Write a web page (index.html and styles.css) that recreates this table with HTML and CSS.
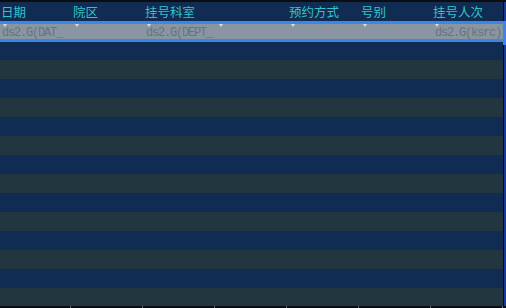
FILE: index.html
```html
<!DOCTYPE html>
<html>
<head>
<meta charset="utf-8">
<link rel="stylesheet" href="styles.css">
</head>
<body>
<div class="table">
  <div class="topline"></div>
  <div class="row header">
    <div class="cell">日期</div>
    <div class="cell">院区</div>
    <div class="cell">挂号科室</div>
    <div class="cell"></div>
    <div class="cell">预约方式</div>
    <div class="cell">号别</div>
    <div class="cell">挂号人次</div>
  </div>
  <div class="sel">
    <div class="cell"><span class="tri"></span>ds2.G(DAT_</div>
    <div class="cell"><span class="tri"></span></div>
    <div class="cell"><span class="tri"></span>ds2.G(DEPT_</div>
    <div class="cell"><span class="tri"></span></div>
    <div class="cell"><span class="tri"></span></div>
    <div class="cell"><span class="tri"></span></div>
    <div class="cell last"><span class="tri"></span>ds2.G(ksrc)</div>
    <span class="handle"></span>
  </div>
  <div class="body">
    <div class="row first navy"></div>
    <div class="row slate"></div>
    <div class="row navy"></div>
    <div class="row slate"></div>
    <div class="row navy"></div>
    <div class="row slate"></div>
    <div class="row navy"></div>
    <div class="row slate"></div>
    <div class="row navy"></div>
    <div class="row slate"></div>
    <div class="row navy"></div>
    <div class="row slate"></div>
    <div class="row navy"></div>
    <div class="row slate short"></div>
  </div>
  <div class="bottom">
    <span class="tick"></span><span class="tick"></span><span class="tick"></span><span class="tick"></span><span class="tick"></span><span class="tick"></span><span class="tick"></span>
  </div>
</div>
</body>
</html>
```
FILE: styles.css
```css
html, body {
  margin: 0;
  padding: 0;
  background: #0b0d10;
}
.table {
  width: 506px;
  height: 308px;
  overflow: hidden;
  display: flex;
  flex-direction: column;
  background: #173c98;
  position: relative;
}
.topline {
  height: 2px;
  background: #0b0d10;
  flex: none;
}
.row {
  display: grid;
  grid-template-columns: repeat(6, 72px) 71px;
  width: 504px;
  box-sizing: border-box;
  border-right: 1px solid #05080c;
  flex: none;
}
.header {
  height: 19px;
  background: #112c52;
  font-family: "Noto Sans CJK SC", "Noto Sans CJK JP", sans-serif;
  font-size: 12.5px;
  color: #33c4c9;
  line-height: 19px;
}
.header .cell {
  padding-left: 1px;
  white-space: nowrap;
}
.sel {
  position: relative;
  display: grid;
  grid-template-columns: repeat(6, 72px) 71px;
  width: 506px;
  height: 21px;
  box-sizing: border-box;
  border-top: 3px solid #3b86e6;
  border-bottom: 3px solid #3b86e6;
  border-right: 3px solid #3b86e6;
  background: #8996a2;
  font-family: "Liberation Mono", monospace;
  font-size: 12px;
  letter-spacing: -1.2px;
  line-height: 15px;
  color: #68737e;
  flex: none;
}
.sel .cell {
  position: relative;
  padding-left: 2px;
  padding-top: 2px;
  white-space: nowrap;
  overflow: hidden;
}
.sel .cell.last {
  padding-left: 3px;
}
.tri {
  position: absolute;
  left: 3px;
  top: 0;
  width: 0;
  height: 0;
  border-left: 2px solid transparent;
  border-right: 2px solid transparent;
  border-top: 3px solid #d6dce2;
}
.handle {
  position: absolute;
  right: -3px;
  bottom: -6px;
  width: 3px;
  height: 6px;
  background: #3b86e6;
}
.body {
  display: flex;
  flex-direction: column;
  flex: none;
}
.body .row {
  height: 19px;
}
.body .row.first {
  height: 18px;
}
.body .row.short {
  height: 18px;
}
.navy {
  background: #112c52;
}
.slate {
  background: #223640;
}
.bottom {
  flex: 1;
  background: #0b0d10;
  display: grid;
  grid-template-columns: repeat(7, 72px);
}
.tick {
  justify-self: end;
  width: 1px;
  height: 2px;
  margin-right: 1px;
  background: #6a6f75;
}
```
